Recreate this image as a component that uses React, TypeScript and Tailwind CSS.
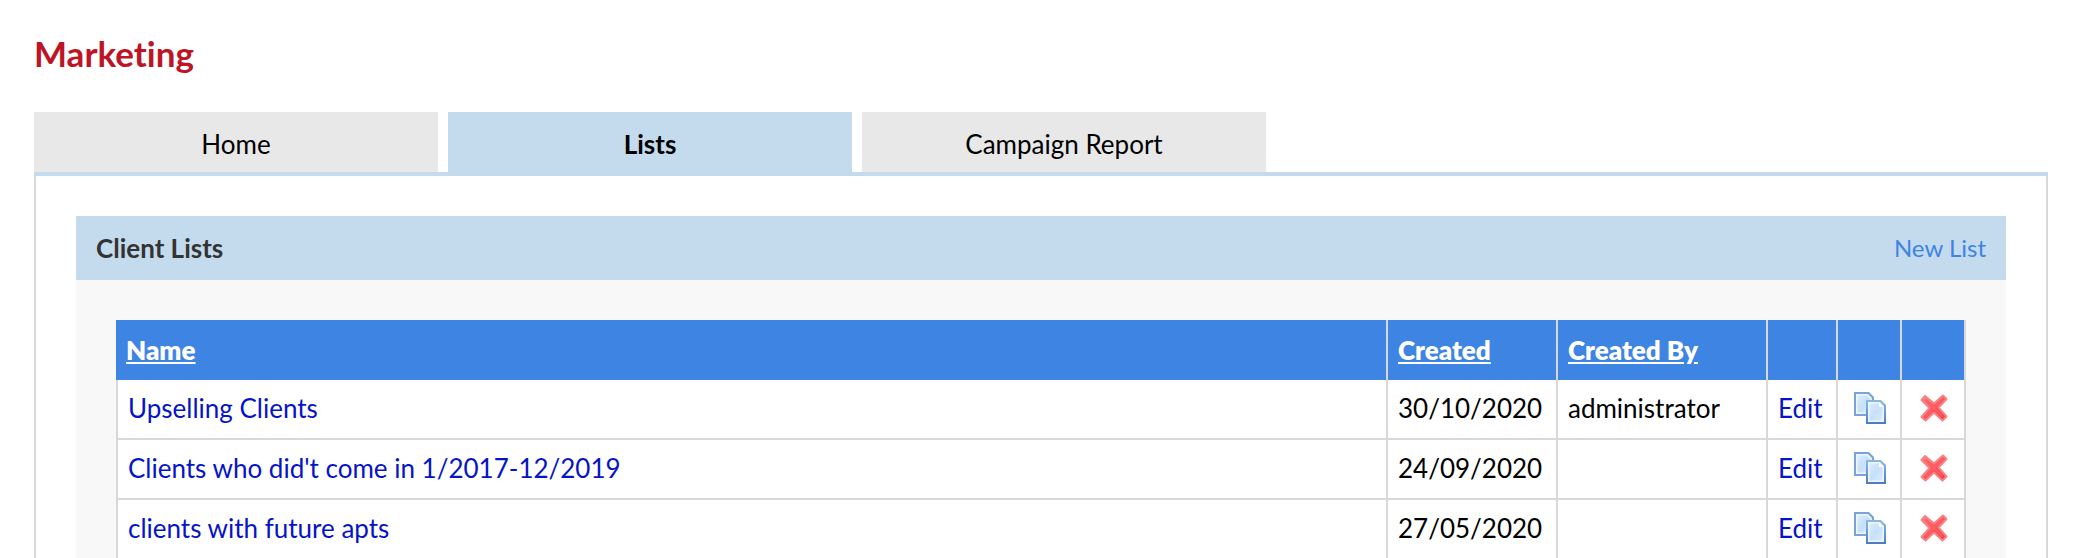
type ClientList = {
  name: string;
  created: string;
  createdBy?: string;
};

const TABS = [
  { label: "Home", active: false },
  { label: "Lists", active: true },
  { label: "Campaign Report", active: false },
];

const LISTS: ClientList[] = [
  { name: "Upselling Clients", created: "30/10/2020", createdBy: "administrator" },
  { name: "Clients who did't come in 1/2017-12/2019", created: "24/09/2020" },
  { name: "clients with future apts", created: "27/05/2020" },
];

function IconGradients() {
  return (
    <svg className="absolute size-0" aria-hidden="true">
      <defs>
        <linearGradient id="page-fill" x1="0" y1="0" x2="1" y2="1">
          <stop offset="0" stopColor="#e4f0fd" />
          <stop offset="0.5" stopColor="#c6e0fa" />
          <stop offset="1" stopColor="#e0effe" />
        </linearGradient>
        <linearGradient id="page-edge" x1="0" y1="0" x2="0" y2="1">
          <stop offset="0" stopColor="#8ab8e0" />
          <stop offset="1" stopColor="#4d7cc6" />
        </linearGradient>
        <linearGradient id="cross-fill" x1="0" y1="0" x2="1" y2="1">
          <stop offset="0" stopColor="#fb8484" />
          <stop offset="0.5" stopColor="#f9565b" />
          <stop offset="1" stopColor="#f0323a" />
        </linearGradient>
      </defs>
    </svg>
  );
}

function CopyIcon() {
  return (
    <svg viewBox="0 0 32 32" className="size-8" aria-hidden="true">
      <path d="M1 1H14.5L19 5.5V23H1Z" fill="url(#page-fill)" stroke="#7ba3da" strokeWidth="2" />
      <path d="M2.75 21.25V2.75H13L17.25 7V21.25Z" fill="none" stroke="#eef6ff" strokeWidth="1.5" />
      <path d="M13 9H26.5L31 13.5V31H13Z" fill="url(#page-fill)" stroke="url(#page-edge)" strokeWidth="2" />
      <path d="M14.75 29.25V10.75H25L29.25 15V29.25Z" fill="none" stroke="#eef6ff" strokeWidth="1.5" />
      <path d="M25 10.5V15H29.5Z" fill="#fff" />
    </svg>
  );
}

function DeleteIcon() {
  return (
    <svg viewBox="0 0 32 32" className="size-8" aria-hidden="true">
      <path
        d="M7 4L16 11.5L25 3.5L28.5 7L20.5 15.5L28.5 24.5L24.5 28.5L16 20.5L7.5 28.5L3.5 25L11.5 16L3.5 8Z"
        fill="url(#cross-fill)"
        stroke="#f98084"
        strokeWidth="2"
        strokeLinejoin="round"
      />
      <path d="M8.5 8.5L24 24M24 8L8.5 24" stroke="#fb5f63" strokeWidth="2" strokeLinecap="round" />
    </svg>
  );
}

function ListsTable() {
  const th = "h-[60px] border-r-2 border-[#d8d8d8] px-2.5 text-left font-extrabold text-white";
  const td = "h-[60px] border-r-2 border-b-2 border-[#d8d8d8] px-2.5 pb-0.5";
  const iconTd = "h-[60px] border-r-2 border-b-2 border-[#d8d8d8] pb-0.5 pl-0.5";

  return (
    <table className="w-full table-fixed border-separate border-spacing-0 bg-white">
      <colgroup>
        <col />
        <col className="w-[170px]" />
        <col className="w-[210px]" />
        <col className="w-[70px]" />
        <col className="w-16" />
        <col className="w-16" />
      </colgroup>
      <thead className="bg-[#3e84e2]">
        <tr>
          <th className={th}>
            <a href="#name" className="underline">Name</a>
          </th>
          <th className={th}>
            <a href="#created" className="underline">Created</a>
          </th>
          <th className={th}>
            <a href="#created-by" className="underline">Created By</a>
          </th>
          <th className={th} />
          <th className={th} />
          <th className={th} />
        </tr>
      </thead>
      <tbody>
        {LISTS.map((list) => (
          <tr key={list.name}>
            <td className={`${td} border-l-2`}>
              <a href="#list" className="text-[#0614c8]">{list.name}</a>
            </td>
            <td className={td}>{list.created}</td>
            <td className={td}>{list.createdBy}</td>
            <td className={td}>
              <a href="#edit" className="text-[#0614c8]">Edit</a>
            </td>
            <td className={iconTd}>
              <button type="button" aria-label={`Copy ${list.name}`} className="mx-auto block">
                <CopyIcon />
              </button>
            </td>
            <td className={iconTd}>
              <button type="button" aria-label={`Delete ${list.name}`} className="mx-auto block">
                <DeleteIcon />
              </button>
            </td>
          </tr>
        ))}
      </tbody>
    </table>
  );
}

export default function App() {
  return (
    <div className="h-screen overflow-hidden bg-white px-[34px] pt-[30px] font-['Lato',sans-serif] text-[26px] leading-8 text-black [font-variant-ligatures:none]">
      <IconGradients />
      <h1 className="text-[35px] leading-[46px] font-bold text-[#bd1526]">Marketing</h1>

      <nav className="mt-9 flex gap-2.5 border-b-4 border-[#c3dbed]">
        {TABS.map((tab) => (
          <a
            key={tab.label}
            href="#tab"
            aria-current={tab.active ? "page" : undefined}
            className={`w-[404px] pt-4 pb-3 text-center ${
              tab.active ? "bg-[#c3dbed] font-bold" : "bg-[#e8e8e8]"
            }`}
          >
            {tab.label}
          </a>
        ))}
      </nav>

      <main className="border-x-2 border-[#d8d8d8] p-10">
        <section className="bg-[#f8f8f8]">
          <header className="flex items-center justify-between bg-[#c3dbed] px-5 py-4">
            <h2 className="font-bold text-[#333]">Client Lists</h2>
            <a href="#new" className="text-2xl leading-8 text-[#3e84e2]">New List</a>
          </header>
          <div className="p-10">
            <ListsTable />
          </div>
        </section>
      </main>
    </div>
  );
}
